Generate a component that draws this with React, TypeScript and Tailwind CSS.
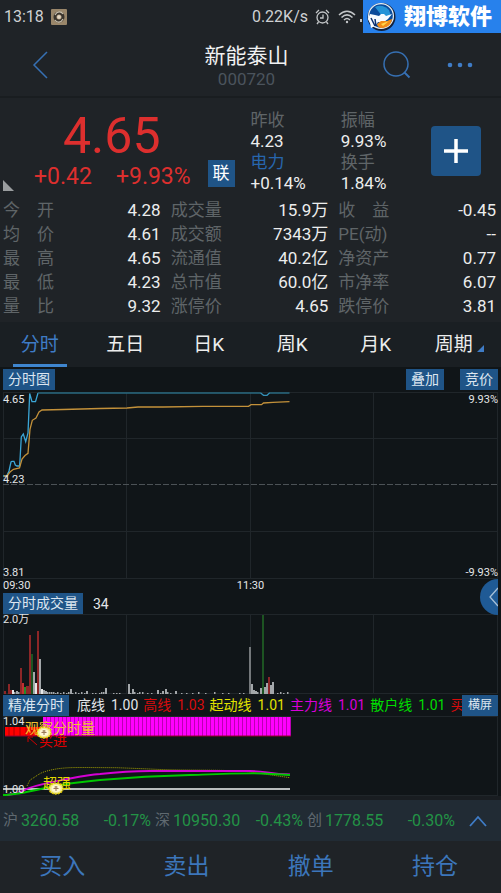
import type { ReactNode } from "react";

type Stat = { label: string; value: string };

const stats: Stat[] = [
  { label: "今　开", value: "4.28" },
  { label: "成交量", value: "15.9万" },
  { label: "收　益", value: "-0.45" },
  { label: "均　价", value: "4.61" },
  { label: "成交额", value: "7343万" },
  { label: "PE(动)", value: "--" },
  { label: "最　高", value: "4.65" },
  { label: "流通值", value: "40.2亿" },
  { label: "净资产", value: "0.77" },
  { label: "最　低", value: "4.23" },
  { label: "总市值", value: "60.0亿" },
  { label: "市净率", value: "6.07" },
  { label: "量　比", value: "9.32" },
  { label: "涨停价", value: "4.65" },
  { label: "跌停价", value: "3.81" },
];

const tabs = ["分时", "五日", "日K", "周K", "月K", "周期"];

const legend = [
  { name: "底线", value: "1.00", color: "text-[#e4e6e8]" },
  { name: "高线", value: "1.03", color: "text-[#d80c0c]" },
  { name: "起动线", value: "1.01", color: "text-[#e2e200]" },
  { name: "主力线", value: "1.01", color: "text-[#d800d8]" },
  { name: "散户线", value: "1.01", color: "text-[#00dc00]" },
  { name: "买进", value: "", color: "text-[#d80c0c]" },
];

const indices = [
  { name: "沪", value: "3260.58", change: "-0.17%" },
  { name: "深", value: "10950.30", change: "-0.43%" },
  { name: "创", value: "1778.55", change: "-0.30%" },
];

const actions = ["买入", "卖出", "撤单", "持仓"];

const RED = "#8c2627";
const GREEN = "#1d5422";
const GRAY = "#a3a7aa";

// x, height, colour
const volume: [number, number, string][] = [
  [2, 3, RED], [6, 10, RED], [8, 4, RED], [10, 4, "#e8e8e8"], [12, 2, GRAY], [14, 3, GRAY], [16, 2, GRAY],
  [18, 26, RED], [20, 11, "#c03030"], [22, 7, "#258a2c"], [24, 8, RED], [25, 8, RED], [27, 59, RED], [29, 40, GREEN],
  [31, 22, GRAY], [33, 11, "#e8e8e8"], [35, 63, RED], [37, 35, GRAY], [39, 5, "#e8e8e8"], [41, 4, GRAY],
  [43, 3, GRAY], [45, 2, GRAY], [47, 2, GRAY], [49, 2, GRAY], [51, 2, GRAY], [53, 1, GRAY], [55, 2, GRAY],
  [58, 1, GRAY], [61, 2, GRAY], [64, 1, GRAY], [66, 2, GRAY], [68, 5, GRAY], [70, 1, GRAY], [73, 2, GRAY],
  [76, 1, GRAY], [79, 2, GRAY], [82, 1, GRAY], [84, 3, GRAY], [90, 1, GRAY], [93, 1, GRAY], [97, 1, GRAY],
  [99, 2, GRAY], [101, 2, GRAY], [103, 6, GRAY], [111, 1, GRAY], [114, 1, GRAY], [117, 1, GRAY],
  [126, 10, GRAY], [128, 1, GRAY], [130, 5, GRAY], [132, 2, GRAY], [135, 1, GRAY], [137, 2, GRAY],
  [140, 2, GRAY], [145, 1, GRAY], [149, 1, GRAY], [155, 4, GRAY], [158, 1, GRAY], [160, 3, GRAY],
  [163, 5, GRAY], [165, 2, GRAY], [168, 1, GRAY], [173, 3, GRAY], [179, 1, GRAY], [184, 1, GRAY],
  [190, 1, GRAY], [196, 2, GRAY], [203, 1, GRAY], [212, 2, GRAY], [220, 1, GRAY], [226, 1, GRAY],
  [237, 1, GRAY], [241, 1, GRAY], [247, 47, "#74787b"], [249, 10, GRAY], [251, 4, GRAY], [253, 3, GRAY],
  [255, 2, GRAY], [258, 6, GRAY], [260, 79, GREEN], [262, 7, GRAY], [264, 11, GRAY], [266, 17, RED],
  [268, 9, GRAY], [270, 12, GRAY], [275, 1, GRAY], [278, 2, GRAY], [281, 1, GRAY], [285, 2, GRAY],
];

const stripes = Array.from({ length: 62 }, (_, i) => 43 + i * 4);

function Tag({ children, className = "" }: { children: ReactNode; className?: string }) {
  return (
    <button type="button" className={`shrink-0 bg-[#1f5487] px-[5px] text-sm leading-[21px] text-[#dce6f0] ${className}`}>
      {children}
    </button>
  );
}

function Grid({ height, rows = [] }: { height: number; rows?: number[] }) {
  return (
    <g stroke="#20262a" fill="none">
      <rect x="0.5" y="0.5" width="494" height={height - 1} />
      <path d={`M123.5 0V${height}M247.5 0V${height}M370.5 0V${height}`} />
      {rows.map((y) => (
        <path key={y} d={`M0 ${y}H495`} />
      ))}
    </g>
  );
}

function Badge() {
  return (
    <div className="absolute right-0 top-0 flex h-[33px] items-center gap-2 bg-[#2781ec] pl-1 pr-[9px]">
      <svg width="29" height="30" viewBox="0 0 29 30" aria-hidden>
        <circle cx="14.500" cy="15" r="14" fill="#13213c" />
        <circle cx="14" cy="14" r="13" fill="#e9f2f8" />
        <circle cx="14" cy="14" r="11.800" fill="#0a4b9b" />
        <path d="M8 5a11 11 0 0 1 14 3l2 6-9 0z" fill="#2493d8" />
        <path d="M3 12l5 1 4 1 2-2 3 0 2 2 6-2-4 5-4 3-6 0-3 4-4 2-1-5-2-4z" fill="#f7fbff" />
        <path d="M10 22l4-3 6 0 5-2c0 5-5 9-10 9-3 0-5-2-5-4z" fill="#f08b18" />
        <path d="M14 22l8-3-6 5z" fill="#ffd64a" />
        <path d="M4 16l4 8M8 17l1 7" stroke="#0a2f70" strokeWidth="1.500" fill="none" />
      </svg>
      <span className="text-[22px] font-black leading-[33px] text-white">翔博软件</span>
    </div>
  );
}

function Header() {
  return (
    <header className="relative border-b-2 border-[#191d20]">
      <div className="flex h-[33px] items-center gap-[7px] px-1 text-base text-[#ced1d3]">
        <span>13:18</span>
        <svg width="16" height="16" viewBox="0 0 16 16" aria-hidden>
          <rect width="16" height="16" rx="1" fill="#99866a" />
          <circle cx="8" cy="8" r="5.500" fill="#39342d" />
          <path d="M4 6c2-4 6-4 8-1M4 11c2 3 6 3 8-1" stroke="#c9c0af" strokeWidth="1.200" fill="none" />
          <circle cx="8" cy="8" r="2.500" fill="#b9a589" />
          <path d="M8 6v4M6 8h4" stroke="#f1e8d8" />
        </svg>
        <span className="ml-auto">0.22K/s</span>
        <div className="flex w-[182px] items-center gap-2">
          <svg width="15" height="16" viewBox="0 0 15 16" fill="none" stroke="#c3c6c8" strokeWidth="1.300" aria-hidden>
            <circle cx="7.500" cy="8.500" r="5.500" />
            <path d="M8 5.500v3.500H5M1 4l3-3M14 4l-3-3M3.500 13L2 15M11.500 13l1.500 2" />
          </svg>
          <svg width="18" height="14" viewBox="0 0 18 14" fill="none" stroke="#c3c6c8" strokeWidth="1.500" aria-hidden>
            <path d="M1 5c5-5 11-5 16 0M3.500 7.500c3.500-3.500 7.500-3.500 11 0M6 10c2-2 4-2 6 0" />
            <circle cx="9" cy="12" r="1.200" fill="#c3c6c8" stroke="none" />
          </svg>
          <svg className="-ml-1" width="12" height="14" viewBox="0 0 12 14" fill="#c3c6c8" aria-hidden>
            <path d="M0 9h2v3H0zM4 6h2v6H4zM8 3h2v9H8z" />
          </svg>
        </div>
      </div>
      <div className="grid h-[63px] grid-cols-[1fr_auto_1fr] items-center">
        <button type="button" aria-label="返回" className="justify-self-start pl-8">
          <svg width="16" height="28" viewBox="0 0 16 28" fill="none" stroke="#3670b3" strokeWidth="1.500">
            <path d="M15 1L2 14l13 13" />
          </svg>
        </button>
        <div className="pr-2 pt-1 text-center">
          <h1 className="text-[21px] leading-[25px] text-[#f0f1f2]">新能泰山</h1>
          <p className="text-[17px] leading-5 text-[#4b545d]">000720</p>
        </div>
        <div className="flex items-center gap-9 justify-self-end pr-7">
          <button type="button" aria-label="搜索">
            <svg width="29" height="28" viewBox="0 0 29 28" fill="none" stroke="#3670b3" strokeWidth="1.500">
              <circle cx="14" cy="13" r="12" />
              <path d="M22.500 21.500l5 5" strokeWidth="2" />
            </svg>
          </button>
          <button type="button" aria-label="更多">
            <svg width="26" height="6" viewBox="0 0 26 6" fill="#3f7cc6">
              <circle cx="3" cy="3" r="2.300" />
              <circle cx="13" cy="3" r="2.300" />
              <circle cx="23" cy="3" r="2.300" />
            </svg>
          </button>
        </div>
      </div>
      <Badge />
    </header>
  );
}

function Quote() {
  return (
    <section className="flex pt-3">
      <div className="flex w-1/2 flex-col pl-[3px] text-[#dd2f2e]">
        <div className="pr-[30px] text-center text-[50px] leading-[53px]">4.65</div>
        <div className="flex items-center text-[23px] leading-7">
          <svg className="mt-4" width="11" height="11" viewBox="0 0 11 11" aria-hidden>
            <path d="M0 0v11h11z" fill="#9a9d9f" />
          </svg>
          <span className="ml-5">+0.42</span>
          <span className="ml-6">+9.93%</span>
          <button type="button" className="-mt-2 ml-auto mr-4 bg-[#1f5487] px-[5px] text-[17px] leading-[27px] text-white">
            联
          </button>
        </div>
      </div>
      <div className="flex flex-1 text-[17px] leading-[21px] text-[#eceded]">
        <div className="flex-1">
          <p className="text-[#5f6568]">昨收</p>
          <p>4.23</p>
          <p>
            <a href="#sector" className="text-[#2766ae]">电力</a>
          </p>
          <p>+0.14%</p>
        </div>
        <div className="flex-1">
          <p className="text-[#5f6568]">振幅</p>
          <p>9.93%</p>
          <p className="text-[#5f6568]">换手</p>
          <p>1.84%</p>
        </div>
        <button
          type="button"
          aria-label="加自选"
          className="mr-5 mt-4 flex h-[50px] w-[50px] items-center justify-center rounded-sm bg-[#1f5487]"
        >
          <svg width="24" height="24" viewBox="0 0 24 24" stroke="#fff" strokeWidth="3.500">
            <path d="M12 0v24M0 12h24" />
          </svg>
        </button>
      </div>
    </section>
  );
}

function Stats() {
  return (
    <dl className="grid grid-cols-3 gap-x-[10px] pb-1 pl-[3px] pr-[5px] pt-1 text-[17px] leading-6">
      {stats.map((s) => (
        <div key={s.label} className="flex justify-between">
          <dt className="text-[#5f6568]">{s.label}</dt>
          <dd className="text-[#eceded]">{s.value}</dd>
        </div>
      ))}
    </dl>
  );
}

function Tabs() {
  return (
    <nav className="flex bg-[#1a1f23] pt-1 text-[19px] leading-[38px] text-[#eceded]">
      {tabs.map((t, i) => (
        <button key={t} type="button" className="flex flex-1 justify-center">
          <span
            className={
              i === 0
                ? "-ml-1 border-b-[3px] border-[#3f86cf] px-2 text-[#3f7cc6]"
                : "flex items-end border-b-[3px] border-transparent"
            }
          >
            {t}
            {t === "周期" && (
              <svg className="mb-3 ml-1" width="7" height="7" viewBox="0 0 7 7" aria-hidden>
                <path d="M7 0v7H0z" fill="#3f7cc6" />
              </svg>
            )}
          </span>
        </button>
      ))}
    </nav>
  );
}

function PriceChart() {
  return (
    <section>
      <div className="flex py-0.5">
        <Tag>分时图</Tag>
        <Tag className="ml-auto mr-4">叠加</Tag>
        <Tag>竞价</Tag>
      </div>
      <div className="relative text-[11px] leading-3 text-[#e4e6e8]">
        <svg className="block h-[187px] w-full" viewBox="0 0 495 187" preserveAspectRatio="none" fill="none">
          <Grid height={187} rows={[46.5, 139.5]} />
          <path d="M0 92.500H495" stroke="#4c5256" strokeDasharray="6 2" />
          <path
            d="M0 84H3.700L6 79 8 70 9 69.300H11L12.300 73 14 74H16.500L17 68 18.300 45 20.300 42 22.700 49.700 25 41 26.700 1.500 29 9.700H32.500L35 1"
            stroke="#3ba6d6"
            strokeWidth="1.300"
          />
          <path d="M35 1H258M266 1H286.500" stroke="#296a80" strokeWidth="1.500" />
          <path d="M257.700 1L260.500 3.300H264L266.500 1" stroke="#3491b8" strokeWidth="1.300" />
          <path
            d="M1 84H4L7 80 10.500 77.300 16.500 76 19 67 22 63.500 25 61.300 27 37.300 29.300 28.300 33 26 36 20 39 18 60 17.500 97 16.500 124 16 135 15 160 15 200 14.300H245.500L248 12.700H258.500L260.500 11 270 10.300 286.500 9.700"
            stroke="#c3913a"
            strokeWidth="1.300"
          />
        </svg>
        <span className="absolute left-0 top-0.5">4.65</span>
        <span className="absolute left-0 top-[82px]">4.23</span>
        <span className="absolute bottom-0 left-0">3.81</span>
        <span className="absolute right-0 top-0.5">9.93%</span>
        <span className="absolute bottom-0 right-0">-9.93%</span>
        <button type="button" aria-label="展开" className="absolute right-0 top-full z-10">
          <svg className="block" width="18" height="36" viewBox="0 0 18 36">
            <path d="M18 0a18 18 0 0 0 0 36z" fill="#1f5a95" />
            <path d="M18 9l-8 9 8 9" fill="none" stroke="#a8c0d8" strokeWidth="1.300" />
          </svg>
        </button>
      </div>
      <div className="grid grid-cols-[1fr_auto_1fr] text-[11px] leading-[14px] text-[#e4e6e8]">
        <span>09:30</span>
        <span>11:30</span>
      </div>
    </section>
  );
}

function VolumeChart() {
  return (
    <section>
      <div className="flex items-center gap-[10px] text-sm text-[#e4e6e8]">
        <Tag>分时成交量</Tag>
        <span>34</span>
      </div>
      <div className="relative">
        <svg className="block h-20 w-full" viewBox="0 0 495 80" preserveAspectRatio="none">
          <Grid height={80} />
          {volume.map(([x, h, color]) => (
            <rect key={x} x={x - 1} y={80 - h} width={h > 2 ? 2 : 1.5} height={h} fill={color} />
          ))}
        </svg>
        <span className="absolute left-0 top-0 text-[11px] leading-3 text-[#e4e6e8]">2.0万</span>
      </div>
    </section>
  );
}

function IndicatorChart() {
  return (
    <section className="pt-px">
      <div className="flex">
        <Tag>精准分时</Tag>
        <div className="flex min-w-0 flex-1 gap-[5px] overflow-hidden whitespace-nowrap pl-2 text-sm leading-[21px]">
          {legend.map((l) => (
            <span key={l.name} className={`flex shrink-0 gap-[6px] ${l.color}`}>
              <span>{l.name}</span>
              {l.value && <span>{l.value}</span>}
            </span>
          ))}
        </div>
        <button type="button" className="shrink-0 bg-[#1f5487] px-[6px] text-xs leading-[19px] text-[#dce6f0]">
          横屏
        </button>
      </div>
      <div className="relative text-sm leading-4">
        <svg className="block h-20 w-full" viewBox="0 0 495 80" preserveAspectRatio="none" fill="none">
          <rect x="0.500" y="0.500" width="494" height="79" stroke="#20262a" />
          <rect x="2" y="11" width="39" height="9" fill="#ff0000" />
          <path d="M6 11v9M11 11v9M17 11v9M23 11v9M29 11v9" stroke="#b00000" />
          <rect x="40" y="1" width="248" height="19" fill="#ff00ff" />
          {stripes.map((x) => (
            <path key={x} d={`M${x + 0.5} 1V20`} stroke="#a8009f" strokeWidth="0.800" />
          ))}
          <path d="M2 20H288" stroke="#9c0030" />
          <path d="M0 73H287" stroke="#b9bcbd" strokeWidth="2" />
          <path
            d="M24 70L27 64C34 60 36 57 44 55 55 52 64 51.500 80 51.500L114 51.700 147 53C180 55 220 53 247 56L287 61.700"
            stroke="#a7a400"
            strokeDasharray="1 1"
          />
          <path
            d="M0 79C16 79 20 74 26 72 45 66 60 64 67 62.500 80 60 90 58.500 97 58 115 56 130 55 147 55H247C262 55 266 58 287 58.500"
            stroke="#d500d5"
            strokeWidth="1.800"
          />
          <path
            d="M0 79C12 79 25 76 40 72.500 60 68 75 66 97 64 120 62 145 60 187 59 215 58 235 57 260 57.500L287 59"
            stroke="#00c800"
            strokeWidth="1.800"
          />
        </svg>
        <span className="absolute left-0 top-0 text-[11px] leading-3 text-[#e4e6e8]">1.04</span>
        <span className="absolute bottom-0 left-0 text-[11px] leading-3 text-[#e4e6e8]">1.00</span>
        <span className="absolute left-9 top-[17px] text-[#e00000]">买进</span>
        <svg className="absolute left-6 top-5" width="11" height="10" viewBox="0 0 11 10" fill="none" stroke="#d00000" aria-hidden>
          <path d="M1 6V1h5M1 1l9 8" />
        </svg>
        <span className="absolute left-[22px] top-1 text-[#f2c230]">观察分时量</span>
        <span className="absolute left-10 top-[59px] text-[#e2d800]">超强</span>
        <Coin className="left-[33px] top-[10px]" />
        <Coin className="left-[45px] top-[66px]" />
      </div>
    </section>
  );
}

function Coin({ className }: { className: string }) {
  return (
    <svg className={`absolute ${className}`} width="16" height="13" viewBox="0 0 16 13" aria-hidden>
      <ellipse cx="8" cy="6.500" rx="7" ry="5.500" fill="#f4ec8c" stroke="#e0ca00" strokeWidth="1.500" strokeDasharray="2 1" />
      <ellipse cx="8" cy="6.500" rx="4.500" ry="3.500" fill="#fff7d4" />
      <path d="M8 4v5M5.500 6.500h5M6.500 5h3" stroke="#9a7a58" />
    </svg>
  );
}

function Footer() {
  return (
    <footer className="border-t-4 border-[#191d21]">
      <div className="flex items-center bg-[#212b34] pl-[3px] text-base leading-[41px] text-[#239346]">
        {indices.map((n) => (
          <div key={n.name} className="flex flex-1 items-center pr-1">
            <span className="mr-[3px] text-[15px] text-[#5f6970]">{n.name}</span>
            <span>{n.value}</span>
            <span className="ml-auto">{n.change}</span>
          </div>
        ))}
        <button type="button" aria-label="展开指数" className="pl-[10px] pr-[14px]">
          <svg width="18" height="12" viewBox="0 0 18 12" fill="none" stroke="#3f7cc6" strokeWidth="1.800">
            <path d="M1 11l8-9 8 9" />
          </svg>
        </button>
      </div>
      <div className="flex pr-1">
        {actions.map((a) => (
          <button key={a} type="button" className="flex-1 text-[23px] leading-[52px] text-[#3c76bb]">
            {a}
          </button>
        ))}
      </div>
    </footer>
  );
}

export default function App() {
  return (
    <main className="min-h-screen overflow-x-hidden bg-[#1f2327] font-['Roboto','Noto_Sans_CJK_SC',sans-serif]">
      <Header />
      <Quote />
      <Stats />
      <Tabs />
      <div className="bg-[#101518] pl-[3px] pr-[3px]">
        <PriceChart />
        <VolumeChart />
        <IndicatorChart />
      </div>
      <Footer />
    </main>
  );
}
